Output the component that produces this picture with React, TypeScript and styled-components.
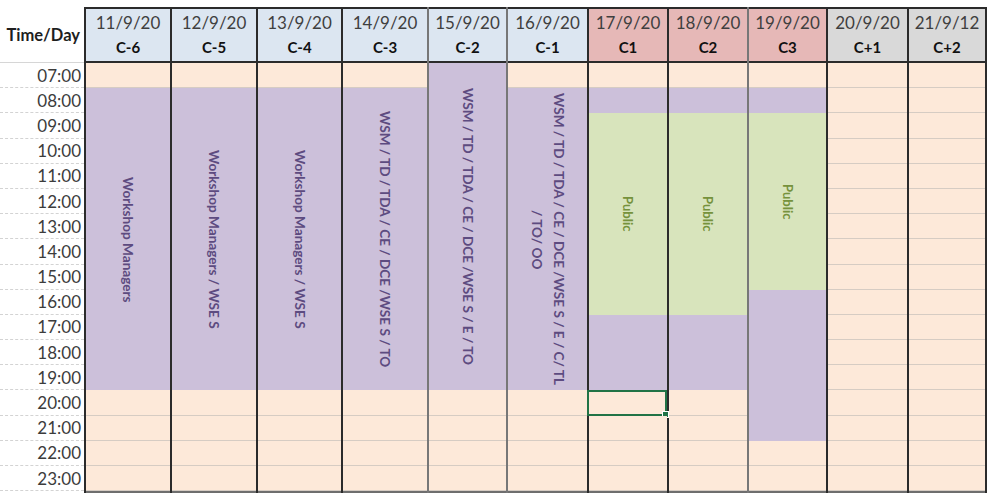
import React from "react";
import styled, { createGlobalStyle, css } from "styled-components";

type Kind = "free" | "staff" | "public";
type Tone = "blue" | "red" | "gray";

interface Segment {
    kind: Kind;
    rows: number;
    text?: React.ReactNode;
    selected?: number; // row inside a free segment that holds the cursor
}

interface Day {
    date: string;
    code: string;
    tone: Tone;
    width: number;
    edge: "dark" | "light";
    segments: Segment[];
}

const ROW_H = 25.2;

const GlobalStyle = createGlobalStyle`
    html, body {
        margin: 0;
        padding: 0;
        background: #ffffff;
    }
    body {
        font-family: Lato, "Liberation Sans", Arial, sans-serif;
    }
`;

const Page = styled.div`
    padding-top: 7px;
    width: 996px;
    height: 495px;
    box-sizing: border-box;
    overflow: hidden;
`;

const Board = styled.div`
    display: flex;
    align-items: flex-start;
`;

const TimeColumn = styled.div`
    width: 84px;
    display: flex;
    flex-direction: column;
`;

const TimeHeader = styled.div`
    height: 56px;
    box-sizing: border-box;
    border-bottom: 1px solid #d6d6d6;
    display: flex;
    align-items: center;
    justify-content: flex-end;
    padding-right: 4px;
    font-size: 16.5px;
    font-weight: 700;
    color: #1e1e1e;
`;

const TimeLabel = styled.div`
    height: ${ROW_H}px;
    box-sizing: border-box;
    border-bottom: 1px dashed #d3d3d3;
    display: flex;
    align-items: center;
    justify-content: flex-end;
    padding-right: 3px;
    font-size: 17px;
    color: #3c3c3c;
`;

const headerTones: Record<Tone, string> = {
    blue: "#dce6f1",
    red: "#e6b8b7",
    gray: "#d9d9d9",
};

const DayColumn = styled.div<{ $width: number; $edge: "dark" | "light"; $last: boolean }>`
    width: ${({ $width }) => $width}px;
    box-sizing: border-box;
    display: flex;
    flex-direction: column;
    border-left: 2px solid ${({ $edge }) => ($edge === "dark" ? "#2b2b2b" : "#777777")};
    ${({ $last }) =>
        $last &&
        css`
            border-right: 2px solid #2b2b2b;
        `}
`;

const DayHeader = styled.div<{ $tone: Tone }>`
    height: 56px;
    box-sizing: border-box;
    border-top: 2px solid #2b2b2b;
    border-bottom: 2px solid #2b2b2b;
    background: ${({ $tone }) => headerTones[$tone]};
    display: flex;
    flex-direction: column;
    align-items: center;
    justify-content: center;
    gap: 3px;
    padding-bottom: 1px;
`;

const DateText = styled.span`
    font-size: 17px;
    color: #3f3f3f;
    line-height: 22px;
`;

const CodeText = styled.span`
    font-size: 15px;
    font-weight: 700;
    color: #111111;
    line-height: 20px;
`;

const DayBody = styled.div`
    display: grid;
    grid-template-rows: repeat(17, ${ROW_H}px);
    border-bottom: 2px solid #6e6e6e;
`;

const kindFill: Record<Kind, string> = {
    free: "#fde9d9",
    staff: "#ccc0da",
    public: "#d8e4bc",
};

const Block = styled.div<{ $kind: Kind; $rows: number }>`
    grid-row: span ${({ $rows }) => $rows};
    background: ${({ $kind }) => kindFill[$kind]};
    display: flex;
    align-items: center;
    justify-content: center;
    overflow: hidden;
`;

const FreeCell = styled.div<{ $selected: boolean }>`
    position: relative;
    background: #fde9d9;
    box-sizing: border-box;
    border-bottom: 1px solid #d6ccc3;
    ${({ $selected }) =>
        $selected &&
        css`
            border: 2px solid #217346;
            margin-left: -2px;
            &::after {
                content: "";
                position: absolute;
                right: -4px;
                bottom: -4px;
                width: 5px;
                height: 5px;
                background: #217346;
                border: 1px solid #ffffff;
            }
        `}
`;

const BlockLabel = styled.span<{ $kind: Kind }>`
    writing-mode: vertical-rl;
    text-align: center;
    white-space: nowrap;
    line-height: 22px;
    font-size: ${({ $kind }) => ($kind === "public" ? "13px" : "13.6px")};
    font-weight: 700;
    color: ${({ $kind }) => ($kind === "public" ? "#76923c" : "#5d4b80")};
`;

const times = [
    "07:00", "08:00", "09:00", "10:00", "11:00", "12:00", "13:00", "14:00", "15:00",
    "16:00", "17:00", "18:00", "19:00", "20:00", "21:00", "22:00", "23:00",
];

const week = (text: React.ReactNode): Segment[] => [
    { kind: "free", rows: 1 },
    { kind: "staff", rows: 12, text },
    { kind: "free", rows: 4 },
];

const days: Day[] = [
    { date: "11/9/20", code: "C-6", tone: "blue", width: 86, edge: "dark", segments: week("Workshop Managers") },
    { date: "12/9/20", code: "C-5", tone: "blue", width: 86, edge: "dark", segments: week("Workshop Managers / WSE S") },
    { date: "13/9/20", code: "C-4", tone: "blue", width: 85, edge: "dark", segments: week("Workshop Managers / WSE S") },
    { date: "14/9/20", code: "C-3", tone: "blue", width: 86, edge: "dark", segments: week("WSM / TD / TDA / CE / DCE /WSE S / TO") },
    {
        date: "15/9/20", code: "C-2", tone: "blue", width: 79, edge: "light",
        segments: [
            { kind: "staff", rows: 13, text: "WSM / TD / TDA / CE / DCE /WSE S / E / TO" },
            { kind: "free", rows: 4 },
        ],
    },
    {
        date: "16/9/20", code: "C-1", tone: "blue", width: 81, edge: "light",
        segments: week(<>WSM / TD / TDA / CE / DCE /WSE S / E / C/ TL<br />/ TO/ OO</>),
    },
    {
        date: "17/9/20", code: "C1", tone: "red", width: 80, edge: "dark",
        segments: [
            { kind: "free", rows: 1 },
            { kind: "staff", rows: 1 },
            { kind: "public", rows: 8, text: "Public" },
            { kind: "staff", rows: 3 },
            { kind: "free", rows: 4, selected: 0 },
        ],
    },
    {
        date: "18/9/20", code: "C2", tone: "red", width: 80, edge: "dark",
        segments: [
            { kind: "free", rows: 1 },
            { kind: "staff", rows: 1 },
            { kind: "public", rows: 8, text: "Public" },
            { kind: "staff", rows: 3 },
            { kind: "free", rows: 4 },
        ],
    },
    {
        date: "19/9/20", code: "C3", tone: "red", width: 79, edge: "light",
        segments: [
            { kind: "free", rows: 1 },
            { kind: "staff", rows: 1 },
            { kind: "public", rows: 7, text: "Public" },
            { kind: "staff", rows: 6 },
            { kind: "free", rows: 2 },
        ],
    },
    { date: "20/9/20", code: "C+1", tone: "gray", width: 81, edge: "dark", segments: [{ kind: "free", rows: 17 }] },
    { date: "21/9/12", code: "C+2", tone: "gray", width: 80, edge: "dark", segments: [{ kind: "free", rows: 17 }] },
];

const renderSegment = (seg: Segment, idx: number) => {
    if (seg.kind === "free") {
        return Array.from({ length: seg.rows }, (_, r) => (
            <FreeCell key={`${idx}-${r}`} $selected={seg.selected === r} />
        ));
    }
    return (
        <Block key={idx} $kind={seg.kind} $rows={seg.rows}>
            {seg.text && <BlockLabel $kind={seg.kind}>{seg.text}</BlockLabel>}
        </Block>
    );
};

const App = () => {
    return (
        <Page>
            <GlobalStyle />
            <Board>
                <TimeColumn>
                    <TimeHeader>Time/Day</TimeHeader>
                    {times.map((t) => (
                        <TimeLabel key={t}>{t}</TimeLabel>
                    ))}
                </TimeColumn>
                {days.map((day, i) => (
                    <DayColumn key={day.code} $width={day.width} $edge={day.edge} $last={i === days.length - 1}>
                        <DayHeader $tone={day.tone}>
                            <DateText>{day.date}</DateText>
                            <CodeText>{day.code}</CodeText>
                        </DayHeader>
                        <DayBody>{day.segments.map(renderSegment)}</DayBody>
                    </DayColumn>
                ))}
            </Board>
        </Page>
    );
};

export default App;
